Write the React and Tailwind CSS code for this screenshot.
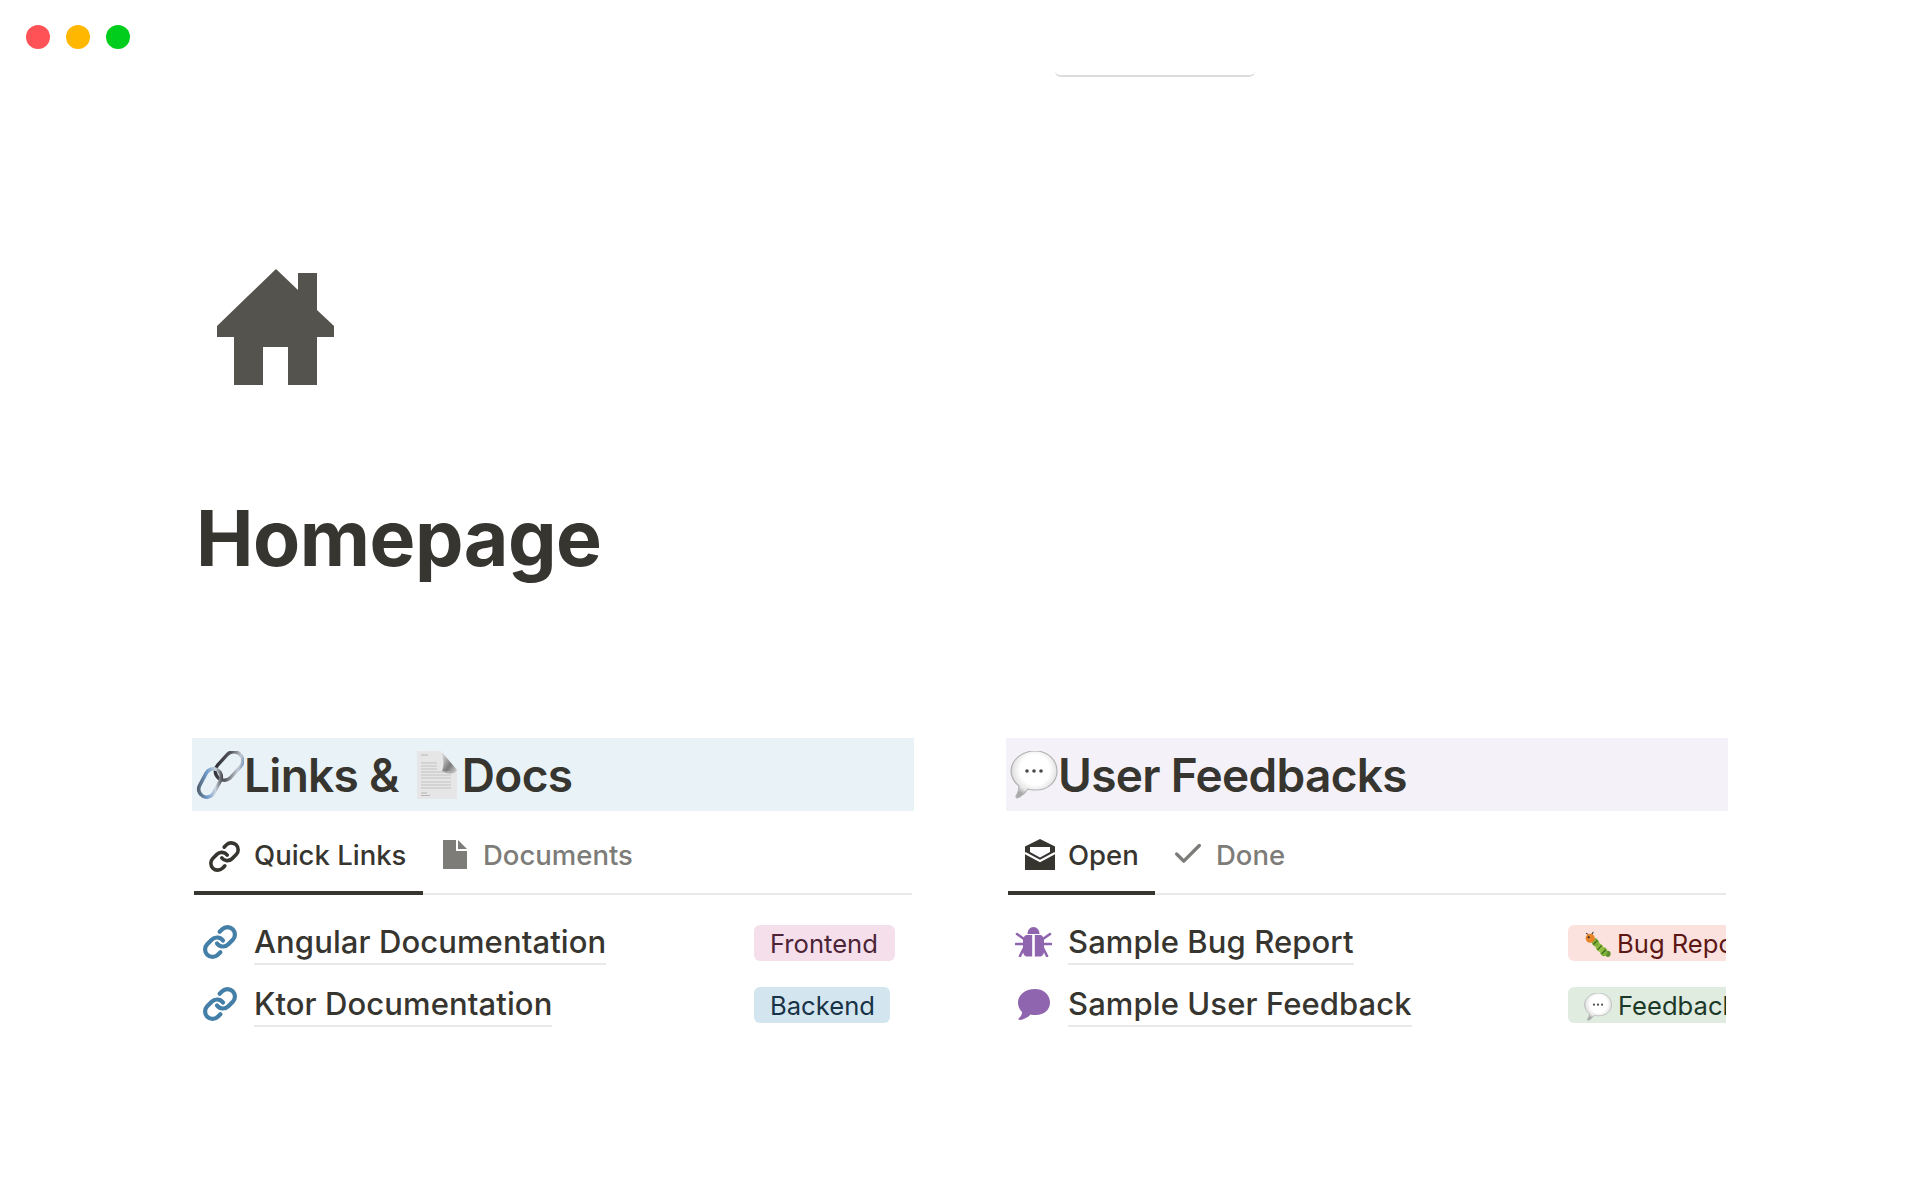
import { Check, Link } from "lucide-react";

function HouseIcon() {
  return (
    <svg width="117" height="116" viewBox="0 0 117 116" className="ml-[25px] block" aria-hidden="true">
      <path
        fill="#55534e"
        d="M59 0 L81 21 V4 H100 V41 L117 57 V68 H100 V116 H71 V78 H46 V116 H17 V68 H0 V57 Z"
      />
    </svg>
  );
}

function ChainEmoji() {
  return (
    <svg width="48" height="48" viewBox="0 0 48 48" className="shrink-0" aria-hidden="true">
      <defs>
        <linearGradient id="chainA" x1="0" y1="1" x2="1" y2="0">
          <stop offset="0" stopColor="#26262a" />
          <stop offset="0.5" stopColor="#5c5f66" />
          <stop offset="0.8" stopColor="#c4cad3" />
          <stop offset="1" stopColor="#5f87b5" />
        </linearGradient>
        <linearGradient id="chainB" x1="0" y1="1" x2="1" y2="0">
          <stop offset="0" stopColor="#4e545c" />
          <stop offset="0.4" stopColor="#6f9ccc" />
          <stop offset="0.7" stopColor="#c9d2dd" />
          <stop offset="1" stopColor="#26262a" />
        </linearGradient>
      </defs>
      <rect x="-9" y="-16" width="18" height="32" rx="9" transform="translate(33 15) rotate(42)" fill="none" stroke="url(#chainA)" strokeWidth="3.4" />
      <rect x="-8" y="-15" width="16" height="30" rx="8" transform="translate(14 32) rotate(28)" fill="none" stroke="url(#chainB)" strokeWidth="3.6" />
    </svg>
  );
}

function PageEmoji() {
  const lines = [12, 15, 18, 21, 24, 27, 31, 34, 37];
  return (
    <svg width="40" height="48" viewBox="0 0 40 48" className="shrink-0" aria-hidden="true">
      <defs>
        <linearGradient id="pageFold" x1="0" y1="0" x2="1" y2="1">
          <stop offset="0" stopColor="#f2f2f2" />
          <stop offset="0.6" stopColor="#7a7a7a" />
          <stop offset="1" stopColor="#dcdcdc" />
        </linearGradient>
      </defs>
      <path d="M0 0 H24 L40 19 V48 H0 Z" fill="#e6e6e6" />
      <path d="M24 0 L40 19 C38 24 30 23 25 20 C28 13 26 6 24 0 Z" fill="url(#pageFold)" />
      <path d="M4 4 H11" stroke="#b5b5b5" strokeWidth="1" />
      {lines.map((y) => (
        <path key={y} d={`M4 ${y} H${y < 20 ? 20 : 34}`} stroke="#c2c2c2" strokeWidth="1" />
      ))}
      <path d="M4 42 H10 M4 44.5 H13" stroke="#b5b5b5" strokeWidth="1" />
    </svg>
  );
}

function BalloonEmoji({ size }) {
  return (
    <svg width={size} height={size} viewBox="0 0 48 48" className="shrink-0" aria-hidden="true">
      <defs>
        <radialGradient id="balloon" cx="0.52" cy="0.4" r="0.58">
          <stop offset="0.55" stopColor="#ffffff" />
          <stop offset="0.82" stopColor="#e4e4e4" />
          <stop offset="1" stopColor="#a9a9a9" />
        </radialGradient>
      </defs>
      <path
        d="M25 0 C38 0 47 9 47 20 C47 31 38 39 26 39 C23 39 20 39 18 38 C15 42 11 46 7 47 C6 47 6 46 6 45 C8 42 9 39 9 35 C4 31 1 26 1 20 C1 9 12 0 25 0 Z"
        fill="url(#balloon)"
        stroke="#b3b3b3"
        strokeWidth="1.2"
      />
      <circle cx="17" cy="20" r="1.8" fill="#4a4a4a" />
      <circle cx="24" cy="20" r="1.8" fill="#4a4a4a" />
      <circle cx="31" cy="20" r="1.8" fill="#4a4a4a" />
    </svg>
  );
}

function CaterpillarEmoji() {
  return (
    <svg width="27" height="27" viewBox="0 0 26 26" className="shrink-0" aria-hidden="true">
      <path d="M2 2 L5 4 M9 1 L7 4" stroke="#333" strokeWidth="1" />
      <ellipse cx="23" cy="22" rx="2.6" ry="3" fill="#5f8f2a" />
      <ellipse cx="19" cy="20" rx="3.5" ry="4.4" fill="#7fb13a" />
      <ellipse cx="15" cy="16" rx="3.5" ry="4.4" fill="#94bf45" transform="rotate(-35 15 16)" />
      <ellipse cx="11" cy="11" rx="3.4" ry="4.2" fill="#7fb13a" transform="rotate(-35 11 11)" />
      <path d="M17 22 L21 18 M13 18 L17 14 M9 13 L13 9" stroke="#3f6a1d" strokeWidth="1.2" />
      <circle cx="6" cy="7" r="4.4" fill="#e8842c" />
      <circle cx="4.5" cy="6" r="1" fill="#222" />
    </svg>
  );
}

function PageIcon({ className }) {
  return (
    <svg width="24" height="29" viewBox="0 0 24 29" className={className} aria-hidden="true">
      <path fill="currentColor" d="M0 0 H13 V11 H24 V29 H0 Z" />
      <path fill="currentColor" d="M15 0 L24 9 H15 Z" />
    </svg>
  );
}

function OpenMailIcon({ className }) {
  return (
    <svg width="30" height="31" viewBox="0 0 30 31" className={className} aria-hidden="true">
      <path fill="currentColor" d="M15 0 L30 7.5 V31 H0 V7.5 Z" />
      <path fill="#fff" d="M5 8 H25 V13 L15 18.5 L5 13 Z" />
      <path fill="none" stroke="#fff" strokeWidth="2" d="M0 14 L15 22 L30 14" />
    </svg>
  );
}

function BugIcon() {
  return (
    <svg width="37" height="30" viewBox="0 0 37 30" className="shrink-0" aria-hidden="true">
      <path fill="#9065b0" d="M12.5 7 C12.5 3 15 0 18.5 0 C22 0 24.5 3 24.5 7 Z" />
      <path fill="#9065b0" d="M17.2 8 V29.5 H12 C9.5 29.5 8 27 8 24 V13 C8 10 10 8 12 8 Z" />
      <path fill="#9065b0" d="M19.8 8 V29.5 H25 C27.5 29.5 29 27 29 24 V13 C29 10 27 8 25 8 Z" />
      <path
        fill="none"
        stroke="#9065b0"
        strokeWidth="2.6"
        strokeLinecap="round"
        d="M1 17 H8 M36 17 H29 M2 7 L9 12 M35 7 L28 12 M5 29 L9 21 M32 29 L28 21"
      />
    </svg>
  );
}

function ChatIcon() {
  return (
    <svg width="32" height="31" viewBox="0 0 32 31" className="shrink-0" aria-hidden="true">
      <path
        fill="#9065b0"
        d="M17 0 C26 0 32 6 32 13.5 C32 21 26 26 18 26 C15.5 26 14 26 12.5 25.5 C10 28.5 5 31 1.5 31 C0.5 31 0 30 1 29 C3 27.5 4 25.5 4 23 C1.5 20.5 0 17.5 0 13.5 C0 6 7 0 17 0 Z"
      />
    </svg>
  );
}

const leftRows = [
  {
    title: "Angular Documentation",
    icon: <Link size={36} strokeWidth={2.8} className="shrink-0 text-[#447fa8]" />,
    tag: "Frontend",
    tagClass: "bg-[#f4dfeb] text-[#4c2337] w-[141px]",
  },
  {
    title: "Ktor Documentation",
    icon: <Link size={36} strokeWidth={2.8} className="shrink-0 text-[#447fa8]" />,
    tag: "Backend",
    tagClass: "bg-[#d3e5ef] text-[#183347] w-[136px]",
  },
];

const rightRows = [
  {
    title: "Sample Bug Report",
    icon: <BugIcon />,
    tag: "Bug Report",
    emoji: <CaterpillarEmoji />,
    tagClass: "bg-[#fbe2de] text-[#5d1715] w-[200px]",
  },
  {
    title: "Sample User Feedback",
    icon: <ChatIcon />,
    tag: "Feedback",
    emoji: <BalloonEmoji size={28} />,
    tagClass: "bg-[#dfecdf] text-[#1c3829] w-[200px]",
  },
];

function Row({ title, icon, tag, emoji, tagClass }) {
  return (
    <div className="flex h-[62px] items-start overflow-hidden">
      <div className="flex h-[36px] w-[60px] shrink-0 items-center justify-center pr-[9px]">{icon}</div>
      <div className="w-[500px] shrink-0">
        <span className="inline-block border-b-2 border-[#e9e9e8] pb-[3px] text-[31px] leading-[36px] font-medium tracking-[0.1px] text-[#37352f]">
          {title}
        </span>
      </div>
      <div className={`mt-[1px] flex h-[36px] shrink-0 items-center gap-[6px] rounded-[6px] pt-[3px] pl-[16px] text-[25.6px] whitespace-nowrap ${tagClass}`}>
        {emoji}
        <span>{tag}</span>
      </div>
    </div>
  );
}

function Column({ bandClass, heading, tabs, rows }) {
  return (
    <section>
      <h2 className={`flex h-[73px] items-center pt-[1px] pl-[4px] text-[46px] font-semibold tracking-[-0.7px] text-[#37352f] ${bandClass}`}>
        {heading}
      </h2>
      <div className="mx-[2px]">
        <div className="flex h-[84px] border-b-2 border-[#e9e9e8]">{tabs}</div>
        <div className="mt-[29px]">
          {rows.map((row) => (
            <Row key={row.title} {...row} />
          ))}
        </div>
      </div>
    </section>
  );
}

function Tab({ icon, label, active, className }) {
  return (
    <div
      className={`flex h-[84px] items-center border-b-4 pt-[10px] text-[27.5px] font-medium ${
        active ? "border-[#37352f] text-[#37352f]" : "border-transparent text-[#7d7c78]"
      } ${className}`}
    >
      {icon}
      <span>{label}</span>
    </div>
  );
}

export default function App() {
  return (
    <div className="relative h-[1200px] overflow-hidden bg-white font-['Inter',sans-serif]">
      <div className="absolute top-0 left-[1055px] h-[77px] w-[200px] rounded-b-[6px] border-b-2 border-[#dddddd]" />

      <header className="flex gap-[16px] pt-[25px] pl-[26px]">
        <span className="h-[24px] w-[24px] rounded-full bg-[#ff5257]" />
        <span className="h-[24px] w-[24px] rounded-full bg-[#ffb700]" />
        <span className="h-[24px] w-[24px] rounded-full bg-[#00cd1c]" />
      </header>

      <main className="pt-[220px] pl-[192px]">
        <HouseIcon />
        <h1 className="mt-[103px] pl-[4px] text-[77px] leading-[100px] font-bold tracking-[-0.5px] text-[#37352f]">
          Homepage
        </h1>

        <div className="mt-[150px] grid w-[1536px] grid-cols-[722px_722px] gap-[92px]">
          <Column
            bandClass="bg-[#e9f3f7]"
            heading={
              <>
                <ChainEmoji />
                <span>Links &amp;</span>
                <span className="ml-[18px]"><PageEmoji /></span>
                <span className="ml-[5px]">Docs</span>
              </>
            }
            tabs={
              <>
                <Tab
                  active
                  label="Quick Links"
                  className="w-[229px] gap-[13px] pl-[14px]"
                  icon={<Link size={33} strokeWidth={2.6} className="shrink-0" />}
                />
                <Tab
                  label="Documents"
                  className="gap-[16px] pl-[20px]"
                  icon={<PageIcon className="mt-[-4px] shrink-0" />}
                />
              </>
            }
            rows={leftRows}
          />
          <Column
            bandClass="bg-[#f4f2f8]"
            heading={
              <>
                <BalloonEmoji size={48} />
                <span>User Feedbacks</span>
              </>
            }
            tabs={
              <>
                <Tab
                  active
                  label="Open"
                  className="w-[147px] gap-[13px] pl-[17px]"
                  icon={<OpenMailIcon className="mt-[-4px] shrink-0" />}
                />
                <Tab
                  label="Done"
                  className="gap-[11px] pl-[16px]"
                  icon={<Check size={34} strokeWidth={2.4} className="mt-[-4px] shrink-0" />}
                />
              </>
            }
            rows={rightRows}
          />
        </div>
      </main>
    </div>
  );
}
